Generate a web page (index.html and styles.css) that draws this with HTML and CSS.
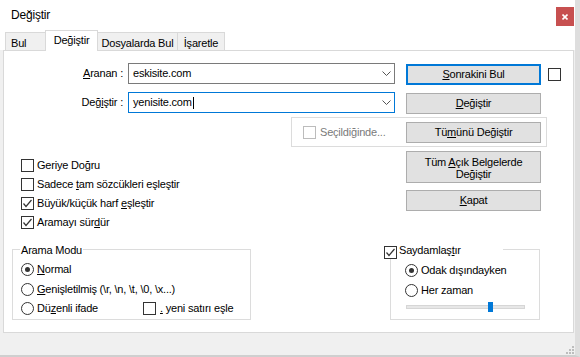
FILE: index.html
```html
<!DOCTYPE html>
<html lang="tr">
<head>
    <meta charset="UTF-8">
    <title>Değiştir</title>
    <link rel="stylesheet" href="styles.css">
</head>
<body>
    <div class="window">
        <!-- Title bar -->
        <div class="titlebar">
            <span class="title">Değiştir</span>
            <span class="close">
                <svg width="6" height="6" viewBox="0 0 6 6"><path d="M0.5 0.5L5.5 5.5M5.5 0.5L0.5 5.5" stroke="#fff" stroke-width="1.6"/></svg>
            </span>
        </div>

        <!-- Tabs -->
        <div class="tabbar">
            <div class="tab tab-bul">Bul</div>
            <div class="tab active">Değiştir</div>
            <div class="tab tab-files">Dosyalarda Bul</div>
            <div class="tab tab-mark">İşaretle</div>
        </div>

        <div class="main">
            <div class="panel">
                <div class="row-a">
                    <div class="fields">
                        <div class="field">
                            <span class="field-label"><u>A</u>ranan :</span>
                            <div class="combo">
                                <span class="combo-text">eskisite.com</span>
                                <svg class="chevron" width="9" height="5" viewBox="0 0 9 5"><polyline points="0.5,0.5 4.5,4.5 8.5,0.5" fill="none" stroke="#555" stroke-width="1"/></svg>
                            </div>
                        </div>
                        <div class="field">
                            <span class="field-label">Değ<u>i</u>ştir :</span>
                            <div class="combo focused">
                                <span class="combo-text">yenisite.com<span class="caret"></span></span>
                                <svg class="chevron" width="9" height="5" viewBox="0 0 9 5"><polyline points="0.5,0.5 4.5,4.5 8.5,0.5" fill="none" stroke="#555" stroke-width="1"/></svg>
                            </div>
                        </div>
                    </div>
                    <div class="side-btns">
                        <div class="btn default"><span><u>S</u>onrakini Bul</span></div>
                        <div class="btn"><span><u>D</u>eğiştir</span></div>
                    </div>
                    <span class="check side-check"></span>
                </div>

                <div class="sel-group">
                    <div class="opt">
                        <span class="check disabled"></span>
                        <span class="sel-label">Seçildiğinde...</span>
                    </div>
                    <div class="btn"><span>Tü<u>m</u>ünü Değiştir</span></div>
                </div>

                <div class="row-c">
                    <div class="opts">
                        <div class="opt opt-row"><span class="check"></span><span class="opt-text">Geriye Doğru</span></div>
                        <div class="opt opt-row"><span class="check"></span><span class="opt-text">Sadece <u>t</u>am sözcükleri eşleştir</span></div>
                        <div class="opt opt-row"><span class="check on"><svg width="11" height="11" viewBox="0 0 11 11"><polyline points="1.5,5.5 4,8.5 9.5,2" fill="none" stroke="#333" stroke-width="1.2"/></svg></span><span class="opt-text">Büyük/küçük harf <u>e</u>şleştir</span></div>
                        <div class="opt opt-row"><span class="check on"><svg width="11" height="11" viewBox="0 0 11 11"><polyline points="1.5,5.5 4,8.5 9.5,2" fill="none" stroke="#333" stroke-width="1.2"/></svg></span><span class="opt-text">Aramayı sür<u>d</u>ür</span></div>
                    </div>
                    <div class="side-btns lower">
                        <div class="btn tall"><span>Tüm <u>A</u>çık Belgelerde<br>Değiştir</span></div>
                        <div class="btn"><span><u>K</u>apat</span></div>
                    </div>
                </div>

                <div class="row-d">
                    <fieldset class="group mode">
                        <legend class="legend-text">Arama Modu</legend>
                        <div class="radios">
                            <div class="opt"><span class="radio on"></span><span class="opt-text"><u>N</u>ormal</span></div>
                            <div class="opt"><span class="radio"></span><span class="opt-text"><u>G</u>enişletilmiş (\r, \n, \t, \0, \x...)</span></div>
                            <div class="opt">
                                <span class="radio"></span><span class="opt-text regex-label">Dü<u>z</u>enli ifade</span>
                                <span class="check"></span><span class="nl-text"><u>.</u> yeni satırı eşle</span>
                            </div>
                        </div>
                    </fieldset>

                    <fieldset class="group transp">
                        <legend class="legend-check">
                            <span class="legend-inner">
                                <span class="check on"><svg width="11" height="11" viewBox="0 0 11 11"><polyline points="1.5,5.5 4,8.5 9.5,2" fill="none" stroke="#333" stroke-width="1.2"/></svg></span>
                                <span class="legend-label">Saydamlaş<u>t</u>ır</span>
                            </span>
                        </legend>
                        <div class="radios transp-radios">
                            <div class="opt"><span class="radio on"></span><span class="opt-text">Odak dışındayken</span></div>
                            <div class="opt"><span class="radio"></span><span class="opt-text">Her zaman</span></div>
                            <div class="slider"><span class="thumb"></span></div>
                        </div>
                    </fieldset>
                </div>
            </div>

            <div class="status">
                <svg width="8" height="8" viewBox="0 0 8 8" fill="#bdbdbd">
                    <rect x="6" y="0" width="2" height="2"/>
                    <rect x="3" y="3" width="2" height="2"/>
                    <rect x="6" y="3" width="2" height="2"/>
                    <rect x="0" y="6" width="2" height="2"/>
                    <rect x="3" y="6" width="2" height="2"/>
                    <rect x="6" y="6" width="2" height="2"/>
                </svg>
            </div>
        </div>
    </div>
</body>
</html>
```

FILE: styles.css
```css
/* Base */
* {
    box-sizing: border-box;
}

body {
    margin: 0;
    font-family: "Liberation Sans", Arial, sans-serif;
    font-size: 11px;
    letter-spacing: -0.2px;
    color: #000;
    background: #fff;
}

u {
    text-decoration: underline;
    text-underline-offset: 1px;
}

.window {
    width: 580px;
    height: 357px;
    display: flex;
    flex-direction: column;
    background: #fff;
    border-right: 5px solid #dedede;
    border-bottom: 2px solid #cfcfcf;
}

/* Title bar */
.titlebar {
    height: 30px;
    flex-shrink: 0;
    display: flex;
    align-items: flex-start;
}

.title {
    padding: 8px 0 0 11px;
    font-size: 12px;
    line-height: 14px;
}

.close {
    width: 18px;
    height: 19px;
    margin: 7px 1px 0 auto;
    background: #c75050;
    display: flex;
    align-items: center;
    justify-content: center;
}

/* Tabs */
.tabbar {
    height: 20px;
    flex-shrink: 0;
    display: flex;
    align-items: flex-end;
    padding-left: 5px;
}

.tab {
    height: 18px;
    padding-top: 4px;
    line-height: 13px;
    background: #f0f0f0;
    border: 1px solid #d9d9d9;
    border-bottom: 0;
    margin-left: -1px;
    text-align: center;
    white-space: nowrap;
}

.tab-bul {
    width: 41px;
    margin-left: 0;
    text-align: left;
    padding-left: 5px;
}

.tab.active {
    width: 53px;
    height: 21px;
    padding-top: 3px;
    margin-bottom: -1px;
    background: #fff;
    position: relative;
    z-index: 1;
}

.tab-files {
    width: 81px;
}

.tab-mark {
    width: 48px;
}

/* Main area */
.main {
    flex: 1;
    display: flex;
    flex-direction: column;
    background: #f0f0f0;
    padding: 0 1px 0 3px;
}

.panel {
    height: 283px;
    flex-shrink: 0;
    background: #fff;
    border: 1px solid #d9d9d9;
    padding-top: 12px;
}

.status {
    flex: 1;
    display: flex;
    justify-content: flex-end;
    align-items: flex-end;
    padding-bottom: 1px;
}

/* Find / replace fields */
.row-a {
    display: flex;
    align-items: flex-start;
}

.fields {
    width: 391px;
    display: flex;
    flex-direction: column;
    gap: 8px;
}

.field {
    display: flex;
    align-items: center;
    height: 21px;
}

.field-label {
    width: 124px;
    padding-right: 5px;
    text-align: right;
    line-height: 13px;
}

.combo {
    width: 267px;
    height: 21px;
    border: 1px solid #7a7a7a;
    display: flex;
    align-items: center;
    padding: 0 3px 0 4px;
    line-height: 13px;
}

.combo.focused {
    border-color: #0078d7;
}

.combo-text {
    flex: 1;
    display: flex;
    align-items: center;
}

.caret {
    width: 1px;
    height: 12px;
    margin-left: 1px;
    background: #000;
}

/* Buttons */
.side-btns {
    margin-left: 11px;
    padding-top: 1px;
    display: flex;
    flex-direction: column;
    gap: 8px;
}

.side-btns.lower {
    margin-left: 0;
    padding-top: 0;
    gap: 7px;
}

.btn {
    width: 135px;
    height: 21px;
    flex-shrink: 0;
    background: #e1e1e1;
    border: 1px solid #adadad;
    display: flex;
    align-items: center;
    justify-content: center;
    text-align: center;
    line-height: 13px;
}

.btn.default {
    border: 2px solid #0078d7;
}

.btn.tall {
    height: 32px;
    line-height: 12px;
    padding-top: 1px;
}

/* Checkboxes and radios */
.check {
    width: 13px;
    height: 13px;
    flex-shrink: 0;
    border: 1px solid #333;
    background: #fff;
    display: flex;
    align-items: center;
    justify-content: center;
}

.check.disabled {
    border-color: #bcbcbc;
}

.side-check {
    margin: 5px 0 0 7px;
}

.radio {
    width: 13px;
    height: 13px;
    flex-shrink: 0;
    border: 1px solid #333;
    border-radius: 50%;
    background: #fff;
    display: flex;
    align-items: center;
    justify-content: center;
}

.radio.on::after {
    content: "";
    width: 5px;
    height: 5px;
    border-radius: 50%;
    background: #333;
}

.opt {
    display: flex;
    align-items: center;
    height: 13px;
    line-height: 13px;
    white-space: nowrap;
}

.opt-text {
    margin-left: 3px;
}

/* "In selection" group */
.sel-group {
    width: 256px;
    height: 30px;
    margin: 3px 0 0 287px;
    border: 1px solid #dcdcdc;
    display: flex;
    align-items: flex-start;
    padding-left: 11px;
}

.sel-group .opt {
    margin-top: 8px;
}

.sel-label {
    margin-left: 4px;
    color: #7a7a7a;
}

.sel-group .btn {
    margin: 4px 5px 0 auto;
}

/* Options + lower buttons */
.row-c {
    display: flex;
    margin-top: 4px;
}

.opts {
    width: 385px;
    margin-left: 17px;
    padding-top: 5px;
    display: flex;
    flex-direction: column;
}

.opt-row {
    height: 19px;
}

/* Bottom groups */
.row-d {
    display: flex;
    margin-top: 9px;
    padding-left: 8px;
}

.group {
    margin: 0;
    padding: 0;
    min-width: 0;
    height: 79px;
    border: 1px solid #dcdcdc;
}

.mode {
    width: 239px;
}

.transp {
    width: 150px;
    margin-left: 139px;
}

.legend-text {
    height: 16px;
    margin-left: 7px;
    padding: 3px 1px 0;
    line-height: 13px;
}

.legend-check {
    width: 119px;
    height: 16px;
    margin-left: -7px;
    padding: 0;
}

.legend-inner {
    display: flex;
    align-items: flex-start;
}

.legend-inner .check {
    margin-top: 5px;
}

.legend-label {
    margin: 3px 0 0 2px;
    line-height: 13px;
}

.radios {
    display: flex;
    flex-direction: column;
    gap: 6.5px;
    padding: 6px 0 0 8px;
}

.regex-label {
    width: 106px;
}

.nl-text {
    margin-left: 4px;
}

.transp-radios {
    gap: 7px;
    padding: 7px 0 0 14px;
}

.slider {
    width: 119px;
    height: 4px;
    margin: 1px 0 0 1px;
    background: #e7e7e7;
    border: 1px solid #d6d6d6;
    display: flex;
    align-items: center;
}

.thumb {
    width: 5px;
    height: 10px;
    flex-shrink: 0;
    margin-left: 81px;
    background: #0078d7;
}
```
